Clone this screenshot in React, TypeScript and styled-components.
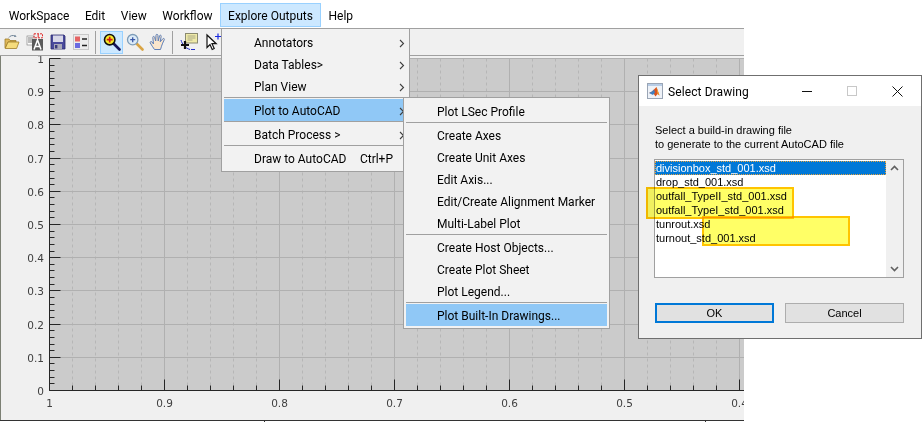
import React from "react";
import styled, { createGlobalStyle } from "styled-components";

const GlobalStyle = createGlobalStyle`
  html, body {
    margin: 0;
    padding: 0;
    background: #fff;
  }
  #root {
    width: 924px;
    height: 422px;
    overflow: hidden;
  }
`;

const Page = styled.div`
  position: relative;
  width: 924px;
  height: 422px;
  overflow: hidden;
  background: #fff;
`;

const AppWindow = styled.div`
  width: 744px;
  height: 422px;
  display: flex;
  flex-direction: column;
  overflow: hidden;
`;

const MenuBar = styled.div`
  height: 28px;
  box-sizing: border-box;
  padding: 3px 0 1px 1px;
  display: flex;
  background: #fff;
  font: 12px Roboto, sans-serif;
  color: #000;
`;

const MenuTitle = styled.div<{ $open?: boolean }>`
  box-sizing: border-box;
  padding: 2px 6.8px 0;
  display: flex;
  align-items: center;
  white-space: nowrap;
  border: 1px solid ${(p) => (p.$open ? "#99d1ff" : "transparent")};
  background: ${(p) => (p.$open ? "#cce8ff" : "transparent")};
`;

const Toolbar = styled.div`
  height: 28px;
  box-sizing: border-box;
  display: flex;
  align-items: center;
  background: #f0f0f0;
  border-top: 1px solid #a0a0a0;
  border-bottom: 1px solid #a0a0a0;
`;

const ToolButton = styled.div<{ $active?: boolean }>`
  width: 23px;
  height: 23px;
  box-sizing: border-box;
  display: flex;
  align-items: center;
  justify-content: center;
  border: 1px solid ${(p) => (p.$active ? "#99d1ff" : "transparent")};
  background: ${(p) => (p.$active ? "#cce8ff" : "transparent")};
`;

const ToolSeparator = styled.div`
  width: 1px;
  height: 23px;
  margin: 0 4px 0 3px;
  background: #a0a0a0;
`;

const PlotPanel = styled.div`
  flex: 1;
  min-height: 0;
  background: #f0f0f0;
  border-left: 1px solid #7c8074;
`;

const PlotSvg = styled.svg`
  display: block;
  margin-left: -1px;
`;

const StatusEdge = styled.div`
  height: 2px;
  box-sizing: border-box;
  border-top: 1px solid #333;
  background: repeating-linear-gradient(to right, #fff 0 88px, #333 88px 88.2px);
`;

const Menu = styled.div<{ $left: number; $top: number; $width: number }>`
  position: absolute;
  left: ${(p) => p.$left}px;
  top: ${(p) => p.$top}px;
  width: ${(p) => p.$width}px;
  box-sizing: border-box;
  padding: 2px;
  background: #f2f2f2;
  border: 1px solid #a0a0a0;
  font: 12px Roboto, sans-serif;
  color: #000;
`;

const MenuRow = styled.div<{ $active?: boolean; $indent: number }>`
  position: relative;
  height: 22px;
  display: flex;
  align-items: center;
  justify-content: space-between;
  box-sizing: border-box;
  padding: 2px 2px 0 ${(p) => p.$indent}px;
  white-space: nowrap;
  background: ${(p) => (p.$active ? "#90c8f6" : "transparent")};
`;

const MenuSeparator = styled.div`
  height: 2px;
  box-sizing: border-box;
  border-top: 1px solid #a0a0a0;
`;

const Chevron = styled.svg`
  flex: none;
`;

const Shortcut = styled.span`
  margin-right: 12px;
`;

const DrawingDialog = styled.div`
  position: absolute;
  left: 638px;
  top: 75px;
  width: 284px;
  height: 264px;
  box-sizing: border-box;
  display: flex;
  flex-direction: column;
  background: #f0f0f0;
  border: 1px solid #6f6f6f;
  font: 11px "Liberation Sans", Arial, sans-serif;
  color: #000;
`;

const TitleBar = styled.div`
  height: 30px;
  flex: none;
  display: flex;
  align-items: center;
  background: #fff;
  padding-left: 8px;
  font: 12px Roboto, sans-serif;
  letter-spacing: 0.1px;
`;

const TitleText = styled.span`
  margin-left: 5px;
  padding-top: 2px;
  flex: 1;
`;

const WindowControls = styled.div`
  display: flex;
  align-items: center;
  gap: 35px;
  margin-right: 18px;
`;

const DialogBody = styled.div`
  flex: 1;
  display: flex;
  flex-direction: column;
  padding: 17px 17px 0 15px;
`;

const Prompt = styled.div`
  line-height: 14px;
  padding-left: 1px;
  margin-bottom: 8px;
`;

const FileList = styled.div`
  position: relative;
  height: 119px;
  box-sizing: border-box;
  display: flex;
  background: #fff;
  border: 1px solid #a0a0a0;
`;

const FileRows = styled.div`
  flex: 1;
  padding-top: 1px;
`;

const FileRow = styled.div<{ $selected?: boolean }>`
  height: 14px;
  line-height: 14px;
  box-sizing: border-box;
  padding-left: 1px;
  white-space: nowrap;
  color: ${(p) => (p.$selected ? "#fff" : "#000")};
  background: ${(p) => (p.$selected ? "#0078d7" : "transparent")};
  outline: ${(p) => (p.$selected ? "1px dotted #e8a33d" : "none")};
  outline-offset: -1px;
`;

const ScrollTrack = styled.div`
  width: 17px;
  flex: none;
  display: flex;
  flex-direction: column;
  align-items: center;
  justify-content: space-between;
  padding: 5px 0;
  box-sizing: border-box;
  background: #f0f0f0;
`;

const Marker = styled.div<{ $left: number; $top: number; $width: number; $height: number }>`
  position: absolute;
  left: ${(p) => p.$left}px;
  top: ${(p) => p.$top}px;
  width: ${(p) => p.$width}px;
  height: ${(p) => p.$height}px;
  box-sizing: border-box;
  background: #ffff66;
  border: 2px solid #ffc400;
  mix-blend-mode: multiply;
`;

const ButtonRow = styled.div`
  display: flex;
  justify-content: space-between;
  margin-top: 25px;
  padding-left: 1px;
`;

const DialogButton = styled.div<{ $primary?: boolean }>`
  width: 119px;
  height: 20px;
  box-sizing: border-box;
  display: flex;
  align-items: center;
  justify-content: center;
  background: #e1e1e1;
  border: ${(p) => (p.$primary ? "2px solid #0078d7" : "1px solid #adadad")};
`;

const range = (n: number) => Array.from({ length: n }, (_, i) => i);

const PLOT_LEFT = 49.5;
const PLOT_BOTTOM = 334.5;
const PLOT_TOP = 2.5;
const X_STEP = 115;
const Y_STEP = 33.2;

const Plot = () => {
  const tickColor = "#262626";
  const xMajor = range(7).map((i) => PLOT_LEFT + i * X_STEP);
  const xMinor = range(32)
    .filter((i) => i % 5 !== 0)
    .map((i) => PLOT_LEFT + (i * X_STEP) / 5);
  const yMajor = range(11).map((i) => Math.floor(PLOT_BOTTOM - i * Y_STEP) + 0.5);
  const yMinor = range(51)
    .filter((i) => i % 5 !== 0)
    .map((i) => Math.floor(PLOT_BOTTOM - (i * Y_STEP) / 5) + 0.5);

  return (
    <PlotSvg width="744" height="362" viewBox="0 0 744 362">
      <rect x={PLOT_LEFT} y={PLOT_TOP} width={700} height={PLOT_BOTTOM - PLOT_TOP} fill="#cbcbcb" />
      {xMinor.map((x) => (
        <line key={x} x1={x} x2={x} y1={PLOT_TOP} y2={PLOT_BOTTOM} stroke="#b6b6b6" strokeDasharray="3 3" />
      ))}
      {xMajor.map((x) => (
        <line key={x} x1={x} x2={x} y1={PLOT_TOP} y2={PLOT_BOTTOM} stroke="#b0b0b0" />
      ))}
      {yMajor.map((y) => (
        <line key={y} x1={PLOT_LEFT} x2={744} y1={y} y2={y} stroke="#b0b0b0" />
      ))}
      {xMinor.map((x) => (
        <line key={x} x1={x} x2={x} y1={PLOT_BOTTOM} y2={PLOT_BOTTOM - 5} stroke={tickColor} />
      ))}
      {xMajor.map((x) => (
        <line key={x} x1={x} x2={x} y1={PLOT_BOTTOM} y2={PLOT_BOTTOM - 11} stroke={tickColor} />
      ))}
      {yMinor.map((y) => (
        <line key={y} x1={PLOT_LEFT} x2={PLOT_LEFT + 5} y1={y} y2={y} stroke={tickColor} />
      ))}
      {yMajor.map((y) => (
        <line key={y} x1={PLOT_LEFT} x2={PLOT_LEFT + 11} y1={y} y2={y} stroke={tickColor} />
      ))}
      <line x1={PLOT_LEFT} x2={PLOT_LEFT} y1={PLOT_TOP} y2={PLOT_BOTTOM} stroke={tickColor} />
      <line x1={PLOT_LEFT} x2={744} y1={PLOT_BOTTOM} y2={PLOT_BOTTOM} stroke={tickColor} />
      <g fontFamily="'DejaVu Sans', sans-serif" fontSize="10.5" fill="#404040">
        {["1", "0.9", "0.8", "0.7", "0.6", "0.5", "0.4"].map((label, i) => (
          <text key={label} x={PLOT_LEFT + i * X_STEP} y={351} textAnchor="middle">
            {label}
          </text>
        ))}
        {["0", "0.1", "0.2", "0.3", "0.4", "0.5", "0.6", "0.7", "0.8", "0.9", "1"].map((label, i) => (
          <text key={label} x={44} y={yMajor[i] + 4} textAnchor="end">
            {label}
          </text>
        ))}
      </g>
    </PlotSvg>
  );
};

const ArrowRight = () => (
  <Chevron width="6" height="9" viewBox="0 0 6 9">
    <path d="M1 1l3.500 3.500L1 8" fill="none" stroke="#404040" strokeWidth="1.100" />
  </Chevron>
);

const FolderIcon = () => (
  <svg width="16" height="16" viewBox="0 0 16 16">
    <path d="M5 3.500c1-2 4-2.500 6-1.500" fill="none" stroke="#6d8296" strokeWidth="1" />
    <path d="M11 .8l1.600 2-2.600.2z" fill="#6d8296" />
    <path d="M1 5h4l1 1.500h6V8H4L1.500 14H1z" fill="#e0b95a" stroke="#a07c28" strokeWidth=".8" />
    <path d="M4 8h11l-2.400 6.500H1.200z" fill="#f6dc7c" stroke="#a07c28" strokeWidth=".8" />
  </svg>
);

const FontDocIcon = () => (
  <svg width="18" height="18" viewBox="0 0 18 18">
    <rect x="1" y="3" width="7" height="9" fill="#fff" stroke="#777" strokeWidth=".6" />
    <path d="M2 5h5M2 7h5M2 9h5" stroke="#555" strokeWidth=".8" />
    <rect x="6" y="6" width="11" height="11.500" fill="#5a5a5a" />
    <path d="M8 16.500L11.500 7l3.500 9.500M9.400 13.500h4.200" fill="none" stroke="#fff" strokeWidth="1.500" />
    <rect x="8" y=".8" width="8.500" height="4" fill="none" stroke="#e02b2b" strokeWidth="1" strokeDasharray="2 1" />
    <path d="M12.200 1v3.500" stroke="#e02b2b" />
  </svg>
);

const SaveIcon = () => (
  <svg width="16" height="16" viewBox="0 0 16 16">
    <path d="M1 1h13l1 1v13H1z" fill="#4a4a9c" stroke="#2c2c70" strokeWidth=".8" />
    <rect x="3" y="1.500" width="10" height="6.500" fill="#d8d8e8" />
    <rect x="4" y="10" width="8" height="5" fill="#a9a9b8" />
    <rect x="5" y="11" width="2.400" height="3.400" fill="#3a3a7c" />
  </svg>
);

const LegendIcon = () => (
  <svg width="16" height="16" viewBox="0 0 16 16">
    <rect x=".5" y=".5" width="15" height="15" fill="#ececec" stroke="#c8c8c8" />
    <rect x="2" y="2.500" width="5" height="5" fill="#e56464" />
    <rect x="2" y="9" width="5" height="5" fill="#6a6ae0" />
    <path d="M9 5h5M9 11.500h5" stroke="#222" strokeWidth="1.300" />
  </svg>
);

const ZoomActiveIcon = () => (
  <svg width="18" height="18" viewBox="0 0 18 18">
    <path d="M10.500 10.500l6 6" stroke="#14145a" strokeWidth="2.600" strokeLinecap="round" />
    <circle cx="6.700" cy="6.700" r="5.200" fill="#f6ee2a" stroke="#111" strokeWidth="1.600" />
    <path d="M3.800 6.700h5.800M6.700 3.800v5.800" stroke="#d01818" strokeWidth="1.700" />
  </svg>
);

const ZoomInIcon = () => (
  <svg width="18" height="18" viewBox="0 0 18 18">
    <path d="M10.500 10.500l6 6" stroke="#d9a444" strokeWidth="2.600" strokeLinecap="round" />
    <circle cx="6.700" cy="6.700" r="5.200" fill="#dcebf8" stroke="#7d9cb8" strokeWidth="1.300" />
    <path d="M4.200 6.700h5M6.700 4.200v5" stroke="#3a58a8" strokeWidth="1.300" />
  </svg>
);

const HandIcon = () => (
  <svg width="18" height="18" viewBox="0 0 18 18">
    <path
      d="M5.500 16.500C4 14.500 2.500 12 1.300 10c-.7-1.200.8-2 1.700-1L4.500 11 3.800 4.500c-.1-1.300 1.500-1.500 1.800-.2L6.700 8 7 2.300c.1-1.400 1.800-1.300 1.900 0L9.200 8l1.300-5c.3-1.300 1.900-1 1.700.3L11.200 8.800l2.600-3c.9-.9 2.100 0 1.400 1.100-1.200 2-2 4.500-2.700 6.300-.4 1.200-.7 2.300-1 3.300z"
      fill="#fbe6cc"
      stroke="#5f80b8"
      strokeWidth="1"
    />
  </svg>
);

const AnnotateIcon = () => (
  <svg width="18" height="18" viewBox="0 0 18 18">
    <rect x="5.500" y=".5" width="12" height="9.500" fill="#efeaa8" stroke="#8a8a70" />
    <path d="M7.500 3h8M7.500 5h8M7.500 7h5" stroke="#9a9a80" strokeWidth=".8" />
    <path d="M1 7c1 4 4 8 9 9.500" fill="none" stroke="#2430c8" strokeWidth="1" />
    <path d="M11 16.500h4" stroke="#2430c8" strokeWidth="1" />
    <path d="M5 8v8M1 12h8" stroke="#111" strokeWidth="2.200" />
  </svg>
);

const CursorIcon = () => (
  <svg width="18" height="18" viewBox="-3 0 18 18">
    <path d="M1 2l0 12.500 3-3 2.200 5 2-1-2.200-4.800h4.200z" fill="#fff" stroke="#111" strokeWidth="1.200" />
    <path d="M12 .5v6M9 3.500h6" stroke="#1a2ae0" strokeWidth="1.200" />
  </svg>
);

const MatlabIcon = () => (
  <svg width="16" height="16" viewBox="0 0 16 16">
    <rect x=".5" y=".5" width="15" height="15" fill="#eef2f8" stroke="#9aa5b5" />
    <rect x="1" y="1" width="14" height="2" fill="#b8cde6" />
    <path d="M2 10l3-1.500 2-2L9.500 4l3 8.500-2-1.500-2 2.500-2-3z" fill="#d9531e" />
    <path d="M2 10l3-1.500 2-2 1 3-2 2.500z" fill="#3f7fc0" />
    <path d="M9.500 4l3 8.500-2-1.500z" fill="#f0a030" />
  </svg>
);

const UpArrow = () => (
  <svg width="9" height="6" viewBox="0 0 9 6">
    <path d="M1 5l3.500-3.500L8 5" fill="none" stroke="#606060" strokeWidth="1.600" />
  </svg>
);

const DownArrow = () => (
  <svg width="9" height="6" viewBox="0 0 9 6">
    <path d="M1 1l3.500 3.500L8 1" fill="none" stroke="#606060" strokeWidth="1.600" />
  </svg>
);

const files = [
  "divisionbox_std_001.xsd",
  "drop_std_001.xsd",
  "outfall_TypeII_std_001.xsd",
  "outfall_TypeI_std_001.xsd",
  "tunrout.xsd",
  "turnout_std_001.xsd",
];

type Entry = { label?: string; arrow?: boolean; active?: boolean; shortcut?: string };

const exploreMenu: Entry[] = [
  { label: "Annotators", arrow: true },
  { label: "Data Tables>", arrow: true },
  { label: "Plan View", arrow: true },
  {},
  { label: "Plot to AutoCAD", arrow: true, active: true },
  {},
  { label: "Batch Process >", arrow: true },
  {},
  { label: "Draw to AutoCAD", shortcut: "Ctrl+P" },
];

const plotMenu: Entry[] = [
  { label: "Plot LSec Profile" },
  {},
  { label: "Create Axes" },
  { label: "Create Unit Axes" },
  { label: "Edit Axis..." },
  { label: "Edit/Create Alignment Marker" },
  { label: "Multi-Label Plot" },
  {},
  { label: "Create Host Objects..." },
  { label: "Create Plot Sheet" },
  { label: "Plot Legend..." },
  {},
  { label: "Plot Built-In Drawings...", active: true },
];

const renderEntries = (entries: Entry[], indent: number) =>
  entries.map((entry, i) =>
    entry.label ? (
      <MenuRow key={i} $active={entry.active} $indent={indent}>
        <span>{entry.label}</span>
        {entry.arrow && <ArrowRight />}
        {entry.shortcut && <Shortcut>{entry.shortcut}</Shortcut>}
      </MenuRow>
    ) : (
      <MenuSeparator key={i} />
    )
  );

const App = () => (
  <Page>
    <GlobalStyle />
    <AppWindow>
      <MenuBar>
        <MenuTitle>WorkSpace</MenuTitle>
        <MenuTitle>Edit</MenuTitle>
        <MenuTitle>View</MenuTitle>
        <MenuTitle>Workflow</MenuTitle>
        <MenuTitle $open>Explore Outputs</MenuTitle>
        <MenuTitle>Help</MenuTitle>
      </MenuBar>
      <Toolbar>
        <ToolButton><FolderIcon /></ToolButton>
        <ToolButton><FontDocIcon /></ToolButton>
        <ToolButton><SaveIcon /></ToolButton>
        <ToolButton><LegendIcon /></ToolButton>
        <ToolSeparator />
        <ToolButton $active><ZoomActiveIcon /></ToolButton>
        <ToolButton><ZoomInIcon /></ToolButton>
        <ToolButton><HandIcon /></ToolButton>
        <ToolSeparator />
        <ToolButton><AnnotateIcon /></ToolButton>
        <ToolButton><CursorIcon /></ToolButton>
      </Toolbar>
      <PlotPanel>
        <Plot />
      </PlotPanel>
      <StatusEdge />
    </AppWindow>

    <Menu $left={221} $top={28} $width={189}>{renderEntries(exploreMenu, 30)}</Menu>
    <Menu $left={403} $top={97} $width={207}>{renderEntries(plotMenu, 31)}</Menu>

    <DrawingDialog>
      <TitleBar>
        <MatlabIcon />
        <TitleText>Select Drawing</TitleText>
        <WindowControls>
          <svg width="10" height="10" viewBox="0 0 10 10">
            <path d="M0 5.500h10" stroke="#111" />
          </svg>
          <svg width="10" height="10" viewBox="0 0 10 10">
            <rect x=".5" y=".5" width="9" height="9" fill="none" stroke="#c8c8c8" />
          </svg>
          <svg width="11" height="11" viewBox="0 0 11 11">
            <path d="M.5.5l10 10M10.500.5l-10 10" stroke="#111" />
          </svg>
        </WindowControls>
      </TitleBar>
      <DialogBody>
        <Prompt>
          Select a build-in drawing file
          <br />
          to generate to the current AutoCAD file
        </Prompt>
        <FileList>
          <FileRows>
            {files.map((file, i) => (
              <FileRow key={file} $selected={i === 0}>{file}</FileRow>
            ))}
          </FileRows>
          <ScrollTrack>
            <UpArrow />
            <DownArrow />
          </ScrollTrack>
        </FileList>
        <ButtonRow>
          <DialogButton $primary>OK</DialogButton>
          <DialogButton>Cancel</DialogButton>
        </ButtonRow>
      </DialogBody>
      <Marker $left={7} $top={111} $width={148} $height={32} />
      <Marker $left={63} $top={140} $width={148} $height={30} />
    </DrawingDialog>
  </Page>
);

export default App;
